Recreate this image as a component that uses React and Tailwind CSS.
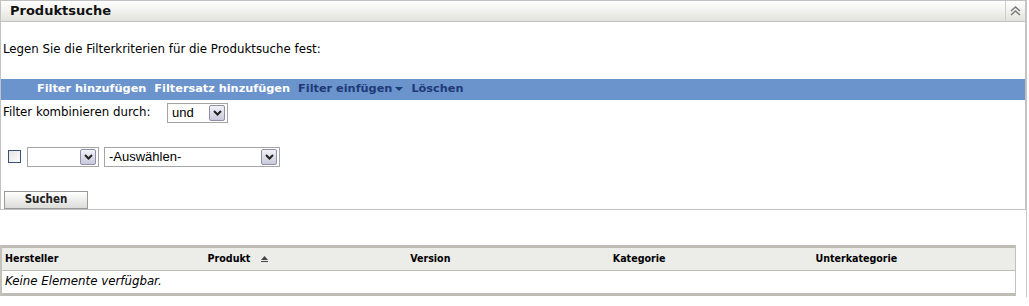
import React from 'react';

const font = { fontFamily: '"DejaVu Sans", Verdana, sans-serif' };
const cond = { fontFamily: '"DejaVu Sans Condensed", "DejaVu Sans", sans-serif', fontStretch: 'condensed' };

function Chevron() {
  return (
    <svg width="9" height="6" viewBox="0 0 9 6">
      <path d="M1 1 L4.5 4.5 L8 1" fill="none" stroke="#222" strokeWidth="2" />
    </svg>
  );
}

function Select({ width, value }) {
  return (
    <div
      className="flex items-center h-[20px] border border-[#a5a5a5] bg-white pl-[4px] pr-[2px] justify-between"
      style={{ width }}
    >
      <span className="text-[13px] text-black" style={{ fontFamily: '"Liberation Sans", Arial, sans-serif' }}>
        {value}
      </span>
      <span className="w-[16px] h-[16px] flex items-center justify-center border border-[#8f8fa8] rounded-[2px] bg-gradient-to-b from-[#f2f2f8] to-[#c9c9dc]">
        <Chevron />
      </span>
    </div>
  );
}

export default function App() {
  const cols = ['Hersteller', 'Produkt', 'Version', 'Kategorie', 'Unterkategorie'];
  return (
    <div className="w-[1029px] h-[306px] bg-white" style={font}>
      <div className="w-[1027px] h-[297px] border-r border-[#c6c6c6]">
        {/* Panel */}
        <div className="w-[1026px] border border-[#c2c2c2]">
          <div className="flex items-center h-[21px] bg-gradient-to-b from-[#ffffff] to-[#e2e2de] border-b border-[#c4c4c0]">
            <div className="flex-1 pl-[9px] text-[13px] font-bold text-[#111]">Produktsuche</div>
            <div className="w-[20px] h-full border-l border-[#cfcfcb] flex items-center justify-center">
              <svg width="11" height="10" viewBox="0 0 11 10">
                <path d="M1 5 L5.5 1 L10 5 M1 9 L5.5 5 L10 9" fill="none" stroke="#777" strokeWidth="1.4" />
              </svg>
            </div>
          </div>

          <div className="pt-[19px] pl-[2px] text-[11.8px] text-black">
            Legen Sie die Filterkriterien für die Produktsuche fest:
          </div>

          <div className="mt-[20px] h-[21px] bg-[#6b93cc] flex items-center gap-[8px] pl-[36px] text-[11.3px] font-bold">
            <span className="text-white">Filter hinzufügen</span>
            <span className="text-white">Filtersatz hinzufügen</span>
            <span className="text-[#1e3a78] flex items-center gap-[3px]">
              Filter einfügen
              <svg width="8" height="5" viewBox="0 0 8 5">
                <path d="M0 0 H8 L4 4 Z" fill="#1e3a78" />
              </svg>
            </span>
            <span className="text-[#1e3a78]">Löschen</span>
          </div>

          <div className="flex items-center mt-[3px] pl-[2px]">
            <span className="text-[11.8px] text-black w-[164px]">Filter kombinieren durch:</span>
            <Select width="61px" value="und" />
          </div>

          <div className="flex items-center mt-[24px] pl-[7px]">
            <span className="w-[13px] h-[13px] border border-[#3a4f7a] bg-gradient-to-br from-[#e4e4e0] to-[#ffffff] mr-[6px]"></span>
            <Select width="72px" value="" />
            <div className="w-[5px]"></div>
            <Select width="176px" value="-Auswählen-" />
          </div>

          <div className="pl-[3px] mt-[24px] leading-none">
            <button
              className="w-[84px] h-[18px] border border-[#9a9a9a] bg-gradient-to-b from-[#ffffff] to-[#dcdcd8] text-[11.5px] font-bold text-[#222] leading-none align-top"
              style={cond}
            >
              Suchen
            </button>
          </div>
        </div>

        {/* Table */}
        <div className="mt-[35px] w-[1016px] border-l-[2px] border-r border-[#c2c2bb] border-l-[#c2c2bb]">
          <div
            className="grid grid-cols-5 h-[26px] bg-[#ecece9] border-t-[3px] border-b border-[#bdbdb5] items-center text-[10.6px] font-bold text-black"
            style={cond}
          >
            {cols.map((c, i) => (
              <div key={c} className="pl-[3px] flex items-center gap-[10px]">
                {c}
                {i === 1 && (
                  <svg width="9" height="8" viewBox="0 0 9 8">
                    <path d="M1 5 L4.5 1 L8 5 Z" fill="#444" />
                    <rect x="1" y="6" width="7" height="1" fill="#444" />
                  </svg>
                )}
              </div>
            ))}
          </div>
          <div className="h-[25px] flex items-center pl-[3px] text-[11.8px] italic text-black border-b-[3px] border-[#bdbdb5]">
            Keine Elemente verfügbar.
          </div>
        </div>
      </div>
    </div>
  );
}
